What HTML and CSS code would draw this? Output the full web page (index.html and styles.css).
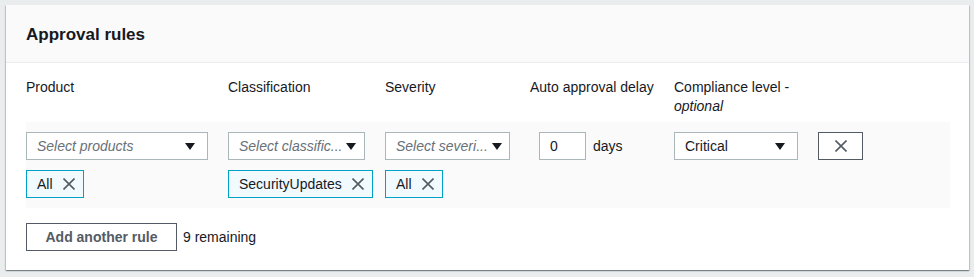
FILE: index.html
```html
<!DOCTYPE html>
<html lang="en">
<head>
    <meta charset="UTF-8">
    <title>Approval rules</title>
    <link rel="stylesheet" href="styles.css">
</head>
<body>
    <div class="panel">
        <div class="panel-header">
            <h2>Approval rules</h2>
        </div>
        <div class="panel-body">
            <div class="rule-grid labels">
                <div class="label">Product</div>
                <div class="label">Classification</div>
                <div class="label">Severity</div>
                <div class="label">Auto approval delay</div>
                <div class="label">Compliance level - <i>optional</i></div>
                <div></div>
            </div>

            <div class="rule-grid rule-row">
                <div class="field">
                    <div class="select placeholder"><span>Select products</span><span class="caret"></span></div>
                    <div class="token">All <svg class="x" viewBox="0 0 12 12"><path d="M0.5 0.5L11.5 11.5M11.5 0.5L0.5 11.5"/></svg></div>
                </div>
                <div class="field">
                    <div class="select placeholder"><span>Select classific...</span><span class="caret"></span></div>
                    <div class="token">SecurityUpdates <svg class="x" viewBox="0 0 12 12"><path d="M0.5 0.5L11.5 11.5M11.5 0.5L0.5 11.5"/></svg></div>
                </div>
                <div class="field">
                    <div class="select placeholder"><span>Select severi...</span><span class="caret"></span></div>
                    <div class="token">All <svg class="x" viewBox="0 0 12 12"><path d="M0.5 0.5L11.5 11.5M11.5 0.5L0.5 11.5"/></svg></div>
                </div>
                <div class="field delay">
                    <div class="number-input">0</div>
                    <span>days</span>
                </div>
                <div class="field">
                    <div class="select"><span>Critical</span><span class="caret"></span></div>
                </div>
                <div class="field">
                    <button class="remove"><svg class="x" viewBox="0 0 12 12"><path d="M0.5 0.5L11.5 11.5M11.5 0.5L0.5 11.5"/></svg></button>
                </div>
            </div>

            <div class="footer">
                <button class="add-button">Add another rule</button>
                <span>9 remaining</span>
            </div>
        </div>
    </div>
</body>
</html>
```

FILE: styles.css
```css
body {
    background-color: #eaeded;
    color: #16191f;
    font-family: "Liberation Sans", Arial, sans-serif;
    font-size: 14px;
    margin: 0;
    padding: 5px 5px 6px 6px;
}
.panel {
    background-color: white;
    width: 963px;
    box-shadow: 0 1px 1px 0 rgba(0, 28, 36, 0.3), 1px 1px 1px 0 rgba(0, 28, 36, 0.15), -1px 1px 1px 0 rgba(0, 28, 36, 0.15);
}
.panel-header {
    background-color: #fafafa;
    border-bottom: 1px solid #eaeded;
    height: 57px;
    padding: 0 20px;
    display: flex;
    align-items: center;
}
.panel-header h2 {
    font-size: 17px;
    font-weight: bold;
    margin: 0;
    padding-top: 2px;
}
.panel-body {
    padding: 0 19px 19px 20px;
}
.rule-grid {
    display: grid;
    grid-template-columns: 182px 137px 125px 124px 124px 45px;
    column-gap: 20px;
}
.labels {
    padding-top: 15px;
    height: 44px;
    line-height: 19px;
}
.rule-row {
    background-color: #fafafa;
    padding: 10px 0;
}
.field {
    display: flex;
    flex-direction: column;
    align-items: flex-start;
}
.select {
    box-sizing: border-box;
    width: 100%;
    height: 28px;
    border: 1px solid #aab7b8;
    background-color: white;
    display: flex;
    align-items: center;
    justify-content: space-between;
    padding: 0 12px 0 10px;
    white-space: nowrap;
}
.placeholder {
    color: #687078;
    font-style: italic;
}
.caret {
    width: 0;
    height: 0;
    border-left: 5px solid transparent;
    border-right: 5px solid transparent;
    border-top: 7px solid #16191f;
    margin-left: 4px;
}
.token {
    box-sizing: border-box;
    height: 28px;
    margin-top: 10px;
    border: 1px solid #00a1c9;
    background-color: #f1faff;
    display: flex;
    align-items: center;
    padding: 0 8px 0 10px;
    gap: 10px;
}
.x {
    width: 12px;
    height: 12px;
    fill: none;
    stroke: #545b64;
    stroke-width: 1.6;
}
.delay {
    flex-direction: row;
    align-items: center;
    align-self: start;
    height: 28px;
    padding-left: 9px;
    gap: 7px;
}
.number-input {
    box-sizing: border-box;
    width: 47px;
    height: 28px;
    border: 1px solid #aab7b8;
    background-color: white;
    padding-left: 10px;
    line-height: 26px;
}
.remove {
    box-sizing: border-box;
    width: 45px;
    height: 28px;
    border: 1px solid #545b64;
    background-color: white;
    display: flex;
    align-items: center;
    justify-content: center;
    padding: 0;
}
.footer {
    display: flex;
    align-items: center;
    gap: 6px;
    margin-top: 15px;
}
.add-button {
    box-sizing: border-box;
    width: 151px;
    height: 28px;
    border: 1px solid #545b64;
    background-color: white;
    color: #545b64;
    font-family: "Liberation Sans", Arial, sans-serif;
    font-size: 14px;
    font-weight: bold;
    padding: 0;
}
```
